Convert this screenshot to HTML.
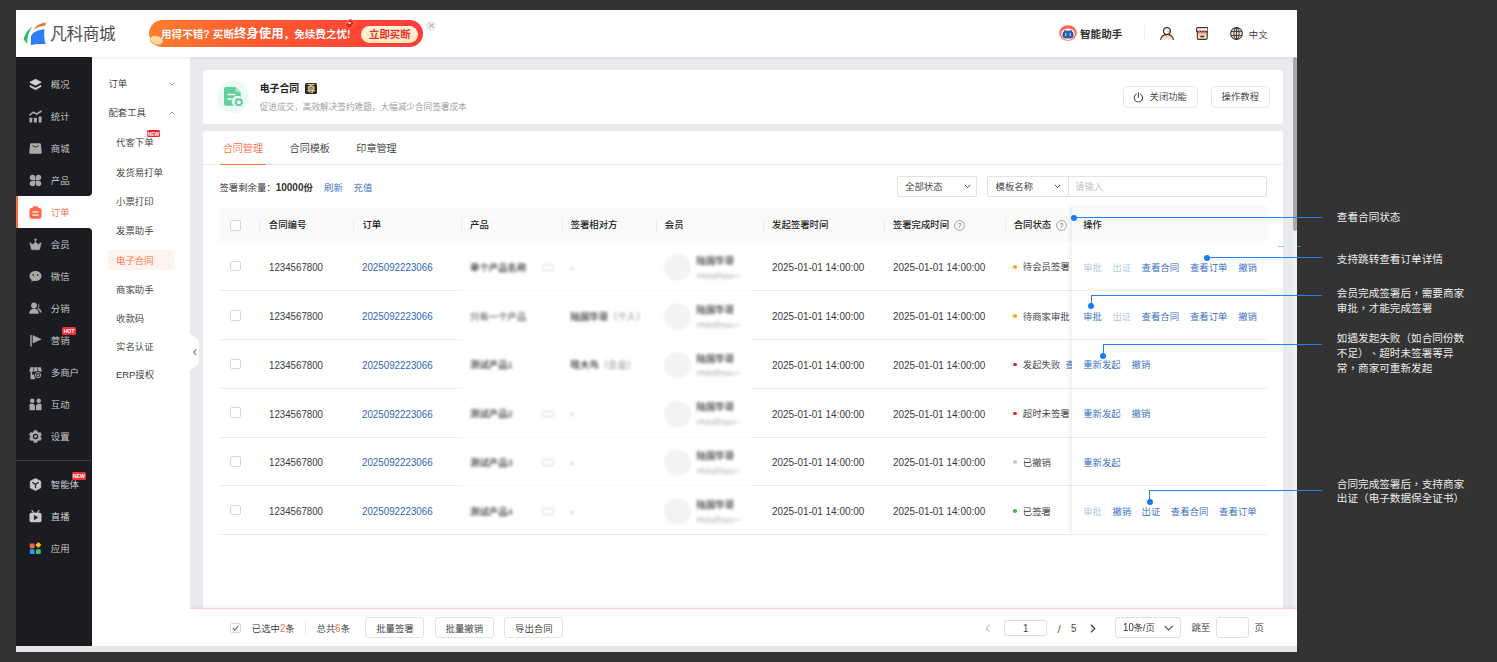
<!DOCTYPE html>
<html lang="zh-CN">
<head>
<meta charset="utf-8">
<title>电子合同</title>
<style>
*{box-sizing:border-box;margin:0;padding:0}
html,body{width:1497px;height:662px;overflow:hidden;background:#333}
body{position:relative;font-family:"Liberation Sans","Noto Sans CJK SC",sans-serif;font-size:9.4px;color:#333;line-height:1;font-weight:350}
.abs{position:absolute}
#frame{position:absolute;left:16px;top:10px;width:1281px;height:642px;background:#e9eaee;overflow:hidden}
#header{position:absolute;left:0;top:0;width:1281px;height:47px;background:#fff;box-shadow:0 1px 4px rgba(0,0,0,.08);z-index:5}
#side1{z-index:2;position:absolute;left:0;top:47px;width:76px;height:595px;background:#fff}
#main{position:absolute;left:0;top:0;width:1281px;height:642px;overflow:hidden}
#side2{z-index:2;position:absolute;left:76px;top:47px;width:98px;height:595px;background:#fff}
.badge{background:#f0303c;color:#fff;font-size:5.2px;font-weight:700;text-align:center;line-height:7.1px;border-radius:1.5px;letter-spacing:-0.1px;overflow:hidden}
.note{font-family:"Liberation Sans","Noto Sans CJK TC",sans-serif;font-weight:400;font-size:10.62px;color:#ececec;white-space:nowrap;text-spacing-trim:space-all}
#notes{position:absolute;left:0;top:0;width:1497px;height:662px;z-index:20}
.t{position:absolute;white-space:nowrap;transform:translateY(-50%)}
</style>
</head>
<body>
<div id="frame">
  <div id="header">
    <svg class="abs" style="left:7.2px;top:12.2px" width="24" height="25" viewBox="0 0 300 312"><path d="M118 60 C60 95 20 150 8 218 L55 275 C50 190 75 115 118 60Z" fill="#2fbf6b"/><path d="M285 5 C215 15 160 45 132 92 C175 62 225 45 280 42Z" fill="#ff6a35"/><path d="M268 90 C190 95 125 125 100 175 L98 290 C150 275 220 270 282 278 C265 215 262 150 268 90Z" fill="#2d7ff9"/></svg>
    <div class="t" style="left:34.2px;top:25.3px;font-size:16.6px;color:#4a4b53;letter-spacing:-0.35px;font-weight:400">凡科商城</div>
    <div class="abs" id="banner" style="left:133px;top:10px;width:274px;height:27px;border-radius:14px;background:linear-gradient(90deg,#ff7e2f 0%,#ff5a30 40%,#ff3a3c 100%)">
      <div class="abs" style="left:1px;top:16px;width:13px;height:8px;border-radius:50%;background:#ffd9a0;transform:rotate(18deg);box-shadow:0 1px 0 #e8a45a"></div>
      <div class="t" style="left:12px;top:14.4px;color:#fff;font-weight:700;font-size:10.6px;text-shadow:0 0.5px 1px rgba(200,40,0,.35)">用得不错?&nbsp;买断<span style="font-size:12.4px">终身使用</span>，免续费之忧!</div>
      <div class="abs" style="left:197.5px;top:-0.5px;width:6px;height:8px;background:#e8262c;border-radius:1px;transform:rotate(38deg);box-shadow:0 0 0 0.5px #ffb45e"></div><div class="abs" style="left:199.300px;top:1.800px;width:2.400px;height:2.400px;border-radius:50%;background:#ffd36b"></div>
      <div class="abs" style="left:212px;top:6px;width:57px;height:16.5px;border-radius:9px;background:linear-gradient(180deg,#fff6e0,#ffe5b8)"></div>
      <div class="t" style="left:220px;top:14.9px;color:#e8322c;font-weight:700;font-size:10.4px">立即买断</div>
    </div>
    <div class="abs" style="left:410px;top:10.5px;width:10px;height:10px;border-radius:50%;background:#ececec"></div>
    <svg class="abs" style="left:412.5px;top:13px" width="5" height="5" viewBox="0 0 5 5"><path d="M0.5 0.5L4.5 4.5M4.5 0.5L0.5 4.5" stroke="#888" stroke-width="0.8"/></svg>

    <svg class="abs" style="left:1043px;top:14.8px" width="18" height="16" viewBox="0 0 36 32"><ellipse cx="18" cy="16" rx="17.5" ry="15.500" fill="#fa6a4a"/><ellipse cx="18" cy="18.300" rx="13.800" ry="11.500" fill="#fff"/><path d="M10 12.500 L11.500 9.300 L15 11.500 H21 L24.500 9.300 L26 12.500 Q29.500 15 29.500 19.500 Q29.500 26.800 22 26.800 H14 Q6.500 26.800 6.500 19.500 Q6.500 15 10 12.500Z" fill="#3d55a5"/><rect x="12" y="15.800" width="2.800" height="6.600" rx="1.300" fill="#62e3ff"/><rect x="21.200" y="15.800" width="2.800" height="6.600" rx="1.300" fill="#62e3ff"/></svg>
    <div class="t" style="left:1064px;top:24.2px;font-size:10.6px;font-weight:700;color:#333">智能助手</div>
    <div class="abs" style="left:1127.5px;top:15px;width:1px;height:16px;background:#eee"></div>
    <svg class="abs" style="left:1144px;top:16.9px" width="14" height="13.300" viewBox="0 0 28 26.600"><defs><linearGradient id="pg" x1="0" y1="0" x2="0" y2="1"><stop offset="0" stop-color="#ffb896"/><stop offset="1" stop-color="#fff1ea"/></linearGradient></defs><path d="M2.500 25.500 C4 17.500 8.500 15 14 15 C19.500 15 24 17.500 25.500 25.500Z" fill="url(#pg)"/><circle cx="13.900" cy="8.100" r="6.900" fill="#fff"/><path d="M14 8 a5 5 0 0 1 5.500 -2.500 a6.900 6.900 0 0 1 -2 8.300Z" fill="#ffc4a6"/><circle cx="13.900" cy="8.100" r="6.900" fill="none" stroke="#333" stroke-width="2.200"/><path d="M1.300 25.300 C3 17.300 8 14.800 14 14.800 C20 14.800 25 17.300 26.700 25.300" fill="none" stroke="#333" stroke-width="2.200" stroke-linecap="round"/></svg>
    <svg class="abs" style="left:1179.6px;top:17.100px" width="12.500" height="13" viewBox="0 0 25 26"><defs><linearGradient id="sg" x1="0" y1="0" x2="0" y2="1"><stop offset="0" stop-color="#ff9d6e"/><stop offset="1" stop-color="#ffe9dd"/></linearGradient></defs><rect x="2.600" y="6" width="19.800" height="18.800" rx="2.800" fill="url(#sg)"/><rect x="2.600" y="1.200" width="19.800" height="5.500" fill="#fff"/><rect x="2.600" y="6" width="19.800" height="18.800" rx="2.800" fill="none" stroke="#333" stroke-width="2.200"/><path d="M3.500 1.200 H21.500 Q23.800 1.200 23.800 3.500 V8 Q23.800 10 21.800 10 Q20 10 19.300 8.600 Q18.500 10 16.500 10 Q14.700 10 14 8.600 Q13.300 10 11.500 10 Q9.700 10 8.800 8.600 Q8 10 6.200 10 Q4.400 10 3.700 8.600 Q3 10 2.200 9.500 Q1.200 9 1.200 8 V3.500 Q1.200 1.200 3.500 1.200Z" fill="#fff" stroke="#333" stroke-width="2.200" stroke-linejoin="round"/><path d="M3 6 H22 V8 Q21 9 19.300 7.500 Q18 9.200 16.500 9 Q15 9 14 7.500 Q13 9 11.500 9 Q10 9 8.800 7.500 Q7.500 9 6.200 9 Q4.500 9 3.700 7.500 L3 8Z" fill="#ff9d6e"/><rect x="8.700" y="17.600" width="7.600" height="3" rx="0.600" fill="#333"/></svg>
    <svg class="abs" style="left:1213.900px;top:17px" width="13" height="13" viewBox="0 0 26 26"><circle cx="13" cy="13" r="11.800" fill="#fff"/><path d="M8 3 H18 V23 H8Z" fill="#ffd2b8" opacity="0.900"/><path d="M2 9 H24 V17 H2Z" fill="#ffd2b8" opacity="0.700"/><circle cx="13" cy="13" r="11.700" fill="none" stroke="#333" stroke-width="2.200"/><ellipse cx="13" cy="13" rx="5.300" ry="11.700" fill="none" stroke="#333" stroke-width="1.900"/><path d="M2.200 8.800 H23.800 M2.200 17.200 H23.800 M13 1.300 V24.700" stroke="#333" stroke-width="1.900"/></svg>
    <div class="t" style="left:1232.8px;top:24.5px;font-size:9.4px;color:#333">中文</div>
  </div>
  <div id="side1">
<div class="abs" style="left:0;top:139px;width:76px;height:32px;background:#fff"></div>
<div class="abs" style="left:0;top:0;width:76px;height:139px;background:#1b1c21;border-bottom-right-radius:4px"></div>
<div class="abs" style="left:0;top:171px;width:76px;height:424px;background:#1b1c21;border-top-right-radius:4px"></div>
<div class="abs" style="left:0;top:139px;width:2px;height:32px;background:#ff6a3d"></div>
<svg class="abs" style="left:12.8px;top:20.70px" width="13" height="13" viewBox="0 0 26 26"><path d="M13 2.5 L24.5 8.5 L13 14.5 L1.500 8.5Z" fill="#d4d4d4" stroke="#d4d4d4" stroke-width="1.5" stroke-linejoin="round"/><path d="M2 14.5 L13 20 L24 14.5 L24 17.5 L13 23.5 L2 17.5Z" fill="#d4d4d4" stroke="#d4d4d4" stroke-width="1" stroke-linejoin="round"/></svg>
<div class="t" style="left:34.8px;top:27.70px;color:#d2d2d2;font-size:9.4px">概况</div>
<svg class="abs" style="left:12.8px;top:52.77px" width="13" height="13" viewBox="0 0 26 26"><rect x="0.800" y="15.500" width="5.600" height="9.700" rx="1.200" fill="#a9a9a9"/><rect x="9.700" y="15.500" width="6" height="9.700" rx="1.200" fill="#a9a9a9"/><rect x="19.300" y="12.800" width="5.900" height="12.400" rx="1.200" fill="#a9a9a9"/><path d="M1.800 10 L8 4.500 L15.500 8 L24.200 2.500" fill="none" stroke="#a9a9a9" stroke-width="3.300" stroke-linecap="round" stroke-linejoin="round"/></svg>
<div class="t" style="left:34.8px;top:59.77px;color:#d2d2d2;font-size:9.4px">统计</div>
<svg class="abs" style="left:12.8px;top:84.84px" width="13" height="13" viewBox="0 0 26 26"><path d="M4.500 2.500 H21.5 Q23.5 2.500 23.8 4.500 L25.5 21 Q25.500 23.5 23 23.5 H3 Q0.500 23.5 0.500 21 L2.200 4.500 Q2.500 2.500 4.500 2.500Z" fill="#a9a9a9"/><path d="M7.500 8 Q13 13 18.500 8" fill="none" stroke="#1b1c21" stroke-width="1.800" stroke-linecap="round"/></svg>
<div class="t" style="left:34.8px;top:91.84px;color:#d2d2d2;font-size:9.4px">商城</div>
<svg class="abs" style="left:12.8px;top:116.91px" width="13" height="13" viewBox="0 0 26 26"><path d="M7 1.500 A5.5 5.5 0 0 1 12.5 7 V12.500 H7 A5.5 5.5 0 0 1 7 1.500Z" fill="#a9a9a9"/><path d="M19 1.500 A5.5 5.5 0 0 1 19 12.500 H13.500 V7 A5.5 5.5 0 0 1 19 1.500Z" fill="#a9a9a9"/><path d="M7 13.500 H12.500 V19 A5.5 5.5 0 1 1 7 13.500Z" fill="#a9a9a9"/><path d="M13.500 13.500 H19 A5.5 5.5 0 1 1 13.500 19Z" fill="#a9a9a9"/></svg>
<div class="t" style="left:34.8px;top:123.91px;color:#d2d2d2;font-size:9.4px">产品</div>
<svg class="abs" style="left:12.8px;top:148.98px" width="13" height="13" viewBox="0 0 26 26"><rect x="0.800" y="4.200" width="24.400" height="21.200" rx="4.500" fill="#ff6a4d"/><rect x="7.500" y="0.600" width="11" height="7" rx="2.200" fill="#ff6a4d"/><rect x="6.800" y="10.300" width="12.400" height="2.800" rx="1" fill="#fff"/><rect x="6.800" y="16.800" width="12.400" height="2.800" rx="1" fill="#fff"/></svg>
<div class="t" style="left:34.8px;top:155.98px;color:#ff6a3d;font-size:9.4px">订单</div>
<svg class="abs" style="left:12.8px;top:181.05px" width="13" height="13" viewBox="0 0 26 26"><circle cx="13" cy="3.500" r="2.500" fill="#a9a9a9"/><path d="M1.500 9 L8 13.500 L13 7 L18 13.500 L24.5 9 L21.5 22 Q21.300 23.5 19.500 23.5 H6.500 Q4.700 23.5 4.500 22Z" fill="#a9a9a9" stroke="#a9a9a9" stroke-width="1" stroke-linejoin="round"/></svg>
<div class="t" style="left:34.8px;top:188.05px;color:#d2d2d2;font-size:9.4px">会员</div>
<svg class="abs" style="left:12.8px;top:213.12px" width="13" height="13" viewBox="0 0 26 26"><path d="M13 2 C19.800 2 25 6.500 25 12 C25 17.500 19.800 22 13 22 C11.500 22 10.200 21.800 9 21.400 L4.500 24 L5.500 19.800 C2.700 18 1 15.200 1 12 C1 6.500 6.200 2 13 2Z" fill="#a9a9a9"/><circle cx="8.500" cy="10" r="1.700" fill="#1b1c21"/><circle cx="17.500" cy="10" r="1.700" fill="#1b1c21"/></svg>
<div class="t" style="left:34.8px;top:220.12px;color:#d2d2d2;font-size:9.4px">微信</div>
<svg class="abs" style="left:12.8px;top:245.19px" width="13" height="13" viewBox="0 0 26 26"><circle cx="10" cy="7" r="5.800" fill="#a9a9a9"/><path d="M0.500 23.500 C0.500 16.500 4.500 13.500 10 13.500 C15.500 13.500 19.500 16.500 19.500 23.500Z" fill="#a9a9a9"/><path d="M18 2.500 C21.500 4 21.500 10.500 18.500 12.500 C22 13.500 25.500 16.500 25.500 21 H22 C21.500 17.500 19.500 15 16.500 13.500 C19.500 10.500 19.500 5.500 18 2.500Z" fill="#a9a9a9"/></svg>
<div class="t" style="left:34.8px;top:252.19px;color:#d2d2d2;font-size:9.4px">分销</div>
<svg class="abs" style="left:12.8px;top:277.26px" width="13" height="13" viewBox="0 0 26 26"><rect x="2.500" y="2" width="3" height="23" rx="1" fill="#a9a9a9"/><path d="M8 3 L24 10.500 L8 18Z" fill="#a9a9a9" stroke="#a9a9a9" stroke-width="1.200" stroke-linejoin="round"/></svg>
<div class="t" style="left:34.8px;top:284.26px;color:#d2d2d2;font-size:9.4px">营销</div>
<svg class="abs" style="left:12.8px;top:310.13px" width="13" height="13" viewBox="0 0 26 26"><path d="M3.200 0.600 H23.400 L25.600 8.800 H0.700Z" fill="#a9a9a9" stroke="#a9a9a9" stroke-width="0.600" stroke-linejoin="round"/><path d="M9.300 0.600V8.800M17.200 0.600V8.800" stroke="#1b1c21" stroke-width="1.300"/><path d="M3 8.600 H6.200 V15 H12.400 V24.600 H3Z" fill="#a9a9a9"/><circle cx="18.100" cy="16.300" r="7.600" fill="#1b1c21"/><circle cx="18.100" cy="16.300" r="5.300" fill="#1b1c21" stroke="#a9a9a9" stroke-width="2"/><path d="M18.100 12.500 L19.400 15 L21.900 16.300 L19.400 17.600 L18.100 20.100 L16.800 17.600 L14.300 16.300 L16.800 15Z" fill="#a9a9a9"/></svg>
<div class="t" style="left:34.8px;top:316.33px;color:#d2d2d2;font-size:9.4px">多商户</div>
<svg class="abs" style="left:12.8px;top:341.40px" width="13" height="13" viewBox="0 0 26 26"><circle cx="6.500" cy="5.500" r="4.500" fill="#a9a9a9"/><circle cx="19.500" cy="5.500" r="4.500" fill="#a9a9a9"/><path d="M1 13.500 Q1 11.500 3 11.500 H8.500 L12 15 V24.500 H1Z" fill="#a9a9a9"/><path d="M25 13.500 Q25 11.500 23 11.500 H17.500 L14 15 V24.500 H25Z" fill="#a9a9a9"/></svg>
<div class="t" style="left:34.8px;top:348.40px;color:#d2d2d2;font-size:9.4px">互动</div>
<svg class="abs" style="left:12.8px;top:373.47px" width="13" height="13" viewBox="0 0 26 26"><path d="M10.300 0.800 H15.700 L16.700 4.200 L19.200 5.600 L22.600 4.800 L25.300 9.500 L22.900 12 V14 L25.300 16.500 L22.600 21.200 L19.200 20.400 L16.700 21.800 L15.700 25.200 H10.300 L9.300 21.800 L6.800 20.400 L3.400 21.200 L0.700 16.500 L3.100 14 V12 L0.700 9.500 L3.400 4.800 L6.800 5.600 L9.300 4.200Z" fill="#a9a9a9" stroke="#a9a9a9" stroke-width="1" stroke-linejoin="round"/><circle cx="13" cy="13" r="5.300" fill="#1b1c21"/><circle cx="13" cy="13" r="2.800" fill="#a9a9a9"/></svg>
<div class="t" style="left:34.8px;top:380.47px;color:#d2d2d2;font-size:9.4px">设置</div>
<div class="abs" style="left:0;top:403px;width:76px;height:1px;background:#3a3b41"></div>
<svg class="abs" style="left:12.8px;top:421.10px" width="13" height="13" viewBox="0 0 26 26"><path d="M13 1 L23.500 6.500 V19.500 L13 25 L2.500 19.500 V6.500Z" fill="#c9c9c9" stroke="#c9c9c9" stroke-width="1.500" stroke-linejoin="round"/><path d="M7.500 9 L13 13 L18.500 9 M13 13 V19.500" fill="none" stroke="#1b1c21" stroke-width="2.400" stroke-linecap="round"/></svg>
<div class="t" style="left:34.8px;top:428.10px;color:#dadada;font-size:9.4px">智能体</div>
<svg class="abs" style="left:12.8px;top:453.10px" width="13" height="13" viewBox="0 0 26 26"><path d="M6 1 L9.500 5.500 M20 1 L16.500 5.500" stroke="#c9c9c9" stroke-width="2.400" stroke-linecap="round"/><rect x="1" y="5.500" width="24" height="19" rx="3.500" fill="#c9c9c9"/><path d="M10.500 10.500 L17.500 15 L10.500 19.500Z" fill="#1b1c21" stroke="#1b1c21" stroke-width="1" stroke-linejoin="round"/></svg>
<div class="t" style="left:34.8px;top:460.10px;color:#dadada;font-size:9.4px">直播</div>
<svg class="abs" style="left:12.8px;top:485.10px" width="13" height="13" viewBox="0 0 26 26"><rect x="1.500" y="3" width="9.500" height="9.500" rx="1.500" fill="#ff6a3d"/><rect x="14.500" y="1.800" width="8.500" height="8.500" rx="1.500" fill="#ffb81f" transform="rotate(45 18.750 6.050)"/><rect x="1.500" y="14.500" width="9.500" height="9.500" rx="1.500" fill="#1e9bff"/><rect x="14" y="14.500" width="9.500" height="9.500" rx="1.500" fill="#3dc06a"/></svg>
<div class="t" style="left:34.8px;top:492.10px;color:#dadada;font-size:9.4px">应用</div>
<div class="abs badge" style="left:45.9px;top:270px;width:14.2px;height:7.9px;line-height:9.600px">HOT</div>
<div class="abs badge" style="left:55.9px;top:415px;width:13.8px;height:7.8px;line-height:9.500px">NEW</div>
</div>
  <div id="side2">
<div class="t" style="left:16.4px;top:26.8px;color:#333;font-size:9.4px">订单</div>
<svg class="abs" style="left:76.500px;top:24.500px" width="6" height="4" viewBox="0 0 12 8"><path d="M1.500 1.500 L6 6 L10.500 1.500" fill="none" stroke="#777" stroke-width="1.500"/></svg>
<div class="t" style="left:16.4px;top:56.4px;color:#333;font-size:9.4px">配套工具</div>
<svg class="abs" style="left:76.500px;top:54px" width="6" height="4" viewBox="0 0 12 8"><path d="M1.500 6.500 L6 2 L10.500 6.500" fill="none" stroke="#777" stroke-width="1.500"/></svg>
<div class="abs" style="left:16px;top:193.2px;width:65.6px;height:19.8px;background:#fff3ee;border-radius:2px"></div>
<div class="t" style="left:24px;top:86.20px;color:#333;font-size:9.4px">代客下单</div>
<div class="t" style="left:24px;top:115.50px;color:#333;font-size:9.4px">发货易打单</div>
<div class="t" style="left:24px;top:144.90px;color:#333;font-size:9.4px">小票打印</div>
<div class="t" style="left:24px;top:174.40px;color:#333;font-size:9.4px">发票助手</div>
<div class="t" style="left:24px;top:203.90px;color:#ff6a3d;font-size:9.4px">电子合同</div>
<div class="t" style="left:24px;top:233.00px;color:#333;font-size:9.4px">商家助手</div>
<div class="t" style="left:24px;top:261.60px;color:#333;font-size:9.4px">收款码</div>
<div class="t" style="left:24px;top:290.10px;color:#333;font-size:9.4px">实名认证</div>
<div class="t" style="left:24px;top:317.90px;color:#333;font-size:9.4px">ERP授权</div>
<div class="abs badge" style="left:54.9px;top:72.85px;width:13.1px;height:7.1px;line-height:8.700px;background:#ee1f2f">NEW</div>
</div>
  <div id="main">
<div class="abs" style="left:187.0px;top:60.0px;width:1080.0px;height:53.7px;background:#fff;border-radius:3px"></div>
<div class="abs" style="left:200.8px;top:70.8px;width:32.0px;height:32.0px;background:#ebfaf2;border-radius:50%"></div>
<svg class="abs" style="left:208px;top:77px" width="21" height="21" viewBox="0 0 42 42"><path d="M4 0 H23 L33.500 10.500 V20 A10.500 10.500 0 0 0 19.500 37.500 H4 Q0 37.500 0 33.500 V4 Q0 0 4 0Z" fill="#5fd09b"/><path d="M23 0 L33.500 10.500 H26 Q23 10.500 23 7.500Z" fill="#a6e6c6"/><rect x="7" y="13.500" width="16" height="3" rx="1" fill="#fff"/><rect x="7" y="22.500" width="8.500" height="3" rx="1" fill="#fff"/><circle cx="29.700" cy="30.300" r="9.400" fill="#5fd09b" stroke="#fff" stroke-width="2"/><path d="M29.700 24.800 L31.400 28.300 L35.200 28.800 L32.400 31.400 L33.100 35.200 L29.700 33.300 L26.300 35.200 L27 31.400 L24.200 28.800 L28 28.300Z" fill="#fff"/></svg>
<div class="t" style="left:243.7px;top:79.4px;font-size:9.9px;font-weight:700;color:#222">电子合同</div>
<div class="abs" style="left:289.0px;top:73.0px;width:12.0px;height:11.2px;background:#2b2724;border-radius:1.500px"></div>
<div class="t" style="left:290.7px;top:79.0px;font-size:8.600px;font-weight:700;color:#ecd3a0">尊</div>
<div class="t" style="left:243.7px;top:97.2px;font-size:8.65px;color:#999">促进成交，高效解决签约难题，大幅减少合同签署成本</div>
<div class="abs" style="left:1107.3px;top:76.2px;width:74.3px;height:21.7px;background:#fff;border:1px solid #e9e9e9;border-radius:4px"></div>
<svg class="abs" style="left:1117.2px;top:81.9px" width="10.800" height="10.800" viewBox="0 0 20 20"><path d="M6 4 A7.800 7.800 0 1 0 14 4" fill="none" stroke="#444" stroke-width="1.900" stroke-linecap="round"/><path d="M10 1.500 V10" stroke="#444" stroke-width="1.900" stroke-linecap="round"/></svg>
<div class="t" style="left:1133.6px;top:88.1px;font-size:9.3px;color:#333">关闭功能</div>
<div class="abs" style="left:1195.2px;top:76.2px;width:58.6px;height:21.7px;background:#fff;border:1px solid #e9e9e9;border-radius:4px"></div>
<div class="t" style="left:1205.5px;top:87.3px;font-size:9.4px;color:#333">操作教程</div>
<div class="abs" style="left:187.0px;top:120.5px;width:1080.0px;height:529.5px;background:#fff;border-radius:3px"></div>
<div class="abs" style="left:187.0px;top:154.0px;width:1080.0px;height:1.0px;background:#eeeeee"></div>
<div class="t" style="left:206.7px;top:138.5px;font-size:10.1px;color:#ff6a40">合同管理</div>
<div class="t" style="left:273.6px;top:138.5px;font-size:10.1px;color:#333">合同模板</div>
<div class="t" style="left:340.3px;top:138.5px;font-size:10.1px;color:#333">印章管理</div>
<div class="abs" style="left:203.8px;top:153.7px;width:46.2px;height:1.6px;background:#ff6a40;border-radius:1px"></div>
<div class="t" style="left:203.4px;top:177.7px;font-size:9.4px;color:#333">签署剩余量：<b style="font-size:10px">10000</b><b>份</b></div>
<div class="t" style="left:308.0px;top:177.7px;color:#2f66bd">刷新</div>
<div class="t" style="left:337.6px;top:177.7px;color:#2f66bd">充值</div>
<div class="abs" style="left:880.8px;top:166.0px;width:80.1px;height:20.6px;background:#fff;border:1px solid #e3e3e3;border-radius:2px"></div>
<div class="t" style="left:889.0px;top:176.5px;color:#333">全部状态</div>
<svg class="abs" style="left:947.6px;top:174.2px" width="7.2" height="4.80" viewBox="0 0 12 8"><path d="M1.500 1.500 L6 6 L10.500 1.500" fill="none" stroke="#444" stroke-width="1.600"/></svg>
<div class="abs" style="left:971.4px;top:166.0px;width:279.4px;height:20.6px;background:#fff;border:1px solid #e3e3e3;border-radius:2px"></div>
<div class="abs" style="left:1051.5px;top:166.0px;width:1.0px;height:20.6px;background:#e3e3e3"></div>
<div class="t" style="left:979.6px;top:176.5px;color:#333">模板名称</div>
<svg class="abs" style="left:1038.2px;top:174.2px" width="7.2" height="4.80" viewBox="0 0 12 8"><path d="M1.500 1.500 L6 6 L10.500 1.500" fill="none" stroke="#444" stroke-width="1.600"/></svg>
<div class="t" style="left:1059.0px;top:176.5px;color:#c0c0c0">请输入</div>
<div class="abs" style="left:203.5px;top:198.1px;width:1047.5px;height:34.4px;background:#fafafa"></div>
<div class="abs" style="left:243.1px;top:208.8px;width:1.0px;height:12.0px;background:#ececec"></div>
<div class="abs" style="left:337.4px;top:208.8px;width:1.0px;height:12.0px;background:#ececec"></div>
<div class="abs" style="left:445.1px;top:208.8px;width:1.0px;height:12.0px;background:#ececec"></div>
<div class="abs" style="left:546.1px;top:208.8px;width:1.0px;height:12.0px;background:#ececec"></div>
<div class="abs" style="left:639.9px;top:208.8px;width:1.0px;height:12.0px;background:#ececec"></div>
<div class="abs" style="left:746.8px;top:208.8px;width:1.0px;height:12.0px;background:#ececec"></div>
<div class="abs" style="left:867.7px;top:208.8px;width:1.0px;height:12.0px;background:#ececec"></div>
<div class="abs" style="left:989.0px;top:208.8px;width:1.0px;height:12.0px;background:#ececec"></div>
<div class="t" style="left:252.8px;top:215.4px;font-weight:500;color:#222;font-size:9.4px">合同编号</div>
<div class="t" style="left:346.4px;top:215.4px;font-weight:500;color:#222;font-size:9.4px">订单</div>
<div class="t" style="left:454.0px;top:215.4px;font-weight:500;color:#222;font-size:9.4px">产品</div>
<div class="t" style="left:554.6px;top:215.4px;font-weight:500;color:#222;font-size:9.4px">签署相对方</div>
<div class="t" style="left:648.8px;top:215.4px;font-weight:500;color:#222;font-size:9.4px">会员</div>
<div class="t" style="left:756.0px;top:215.4px;font-weight:500;color:#222;font-size:9.4px">发起签署时间</div>
<div class="t" style="left:876.8px;top:215.4px;font-weight:500;color:#222;font-size:9.4px">签署完成时间</div>
<div class="t" style="left:997.7px;top:215.4px;font-weight:500;color:#222;font-size:9.4px">合同状态</div>
<svg class="abs" style="left:938.0px;top:209.6px" width="11" height="11" viewBox="0 0 22 22"><circle cx="11" cy="11" r="9.800" fill="none" stroke="#888" stroke-width="1.600"/><text x="11" y="15.800" font-size="14" text-anchor="middle" fill="#555" font-family="Liberation Sans, sans-serif">?</text></svg>
<svg class="abs" style="left:1040.1px;top:209.6px" width="11" height="11" viewBox="0 0 22 22"><circle cx="11" cy="11" r="9.800" fill="none" stroke="#888" stroke-width="1.600"/><text x="11" y="15.800" font-size="14" text-anchor="middle" fill="#555" font-family="Liberation Sans, sans-serif">?</text></svg>
<div class="abs" style="left:214.1px;top:210.1px;width:10.6px;height:10.6px;background:#fff;border:1px solid #d6d6d6;border-radius:1.800px"></div>
<div class="abs" style="left:203.6px;top:280.2px;width:1047.4px;height:1.0px;background:#ececec"></div>
<div class="abs" style="left:442.0px;top:280.2px;width:294.0px;height:1.0px;background:#f9f9f9"></div>
<div class="abs" style="left:214.1px;top:250.9px;width:10.6px;height:10.6px;background:#fff;border:1px solid #d6d6d6;border-radius:1.800px"></div>
<div class="t" style="left:252.5px;top:257.0px;font-size:11px;transform:translateY(-50%) scaleX(0.883);transform-origin:0 50%;color:#3a3a3a">1234567800</div>
<div class="t" style="left:346.1px;top:257.0px;font-size:11px;transform:translateY(-50%) scaleX(0.888);transform-origin:0 50%;color:#2f66bd">2025092223066</div>
<div class="t" style="left:454.0px;top:257.5px;font-size:9.4px;color:#262626;font-weight:500;filter:blur(1.45px)">单个产品名称</div>
<div class="abs" style="left:526.0px;top:254.1px;width:12.0px;height:6.6px;border:1px solid #d0d0d0;border-radius:2.5px;filter:blur(1.3px)"></div>
<div class="t" style="left:554.6px;top:257.5px;font-size:9.4px;color:#222;font-weight:500;filter:blur(1.45px)">-</div>
<div class="abs" style="left:648.4px;top:243.9px;width:26.8px;height:26.8px;background:#f3f3f3;border-radius:50%;filter:blur(1.1px)"></div>
<div class="t" style="left:680.5px;top:250.8px;font-size:9.4px;color:#2a2a2a;font-weight:500;filter:blur(1.45px)">陆国华哥</div>
<div class="t" style="left:680.5px;top:266.5px;font-size:9.2px;color:#b5b5b5;filter:blur(1.45px)">#MallNav~</div>
<div class="t" style="left:755.7px;top:257.0px;font-size:11px;transform:translateY(-50%) scaleX(0.903);transform-origin:0 50%;color:#3a3a3a">2025-01-01 14:00:00</div>
<div class="t" style="left:876.5px;top:257.0px;font-size:11px;transform:translateY(-50%) scaleX(0.903);transform-origin:0 50%;color:#3a3a3a">2025-01-01 14:00:00</div>
<div class="abs" style="left:997.4px;top:255.0px;width:3.6px;height:3.6px;background:#faad14;border-radius:50%"></div>
<div class="t" style="left:1006.8px;top:257.3px;color:#333">待会员签署</div>
<div class="abs" style="left:203.6px;top:328.8px;width:1047.4px;height:1.0px;background:#ececec"></div>
<div class="abs" style="left:442.0px;top:328.8px;width:294.0px;height:1.0px;background:#f9f9f9"></div>
<div class="abs" style="left:214.1px;top:300.0px;width:10.6px;height:10.6px;background:#fff;border:1px solid #d6d6d6;border-radius:1.800px"></div>
<div class="t" style="left:252.5px;top:306.1px;font-size:11px;transform:translateY(-50%) scaleX(0.883);transform-origin:0 50%;color:#3a3a3a">1234567800</div>
<div class="t" style="left:346.1px;top:306.1px;font-size:11px;transform:translateY(-50%) scaleX(0.888);transform-origin:0 50%;color:#2f66bd">2025092223066</div>
<div class="t" style="left:454.0px;top:306.6px;font-size:9.4px;color:#5a5a5a;font-weight:500;filter:blur(1.45px)">只有一个产品</div>
<div class="t" style="left:554.6px;top:306.6px;font-size:9.4px;color:#222;font-weight:500;filter:blur(1.45px)">陆国华哥<span style="color:#999">（个人）</span></div>
<div class="abs" style="left:648.4px;top:293.0px;width:26.8px;height:26.8px;background:#f3f3f3;border-radius:50%;filter:blur(1.1px)"></div>
<div class="t" style="left:680.5px;top:299.9px;font-size:9.4px;color:#2a2a2a;font-weight:500;filter:blur(1.45px)">陆国华哥</div>
<div class="t" style="left:680.5px;top:315.6px;font-size:9.2px;color:#b5b5b5;filter:blur(1.45px)">#MallNav~</div>
<div class="t" style="left:755.7px;top:306.1px;font-size:11px;transform:translateY(-50%) scaleX(0.903);transform-origin:0 50%;color:#3a3a3a">2025-01-01 14:00:00</div>
<div class="t" style="left:876.5px;top:306.1px;font-size:11px;transform:translateY(-50%) scaleX(0.903);transform-origin:0 50%;color:#3a3a3a">2025-01-01 14:00:00</div>
<div class="abs" style="left:997.4px;top:304.1px;width:3.6px;height:3.6px;background:#faad14;border-radius:50%"></div>
<div class="t" style="left:1006.8px;top:306.7px;color:#333">待商家审批</div>
<div class="abs" style="left:203.6px;top:377.8px;width:1047.4px;height:1.0px;background:#ececec"></div>
<div class="abs" style="left:442.0px;top:377.8px;width:294.0px;height:1.0px;background:#f9f9f9"></div>
<div class="abs" style="left:214.1px;top:348.7px;width:10.6px;height:10.6px;background:#fff;border:1px solid #d6d6d6;border-radius:1.800px"></div>
<div class="t" style="left:252.5px;top:354.8px;font-size:11px;transform:translateY(-50%) scaleX(0.883);transform-origin:0 50%;color:#3a3a3a">1234567800</div>
<div class="t" style="left:346.1px;top:354.8px;font-size:11px;transform:translateY(-50%) scaleX(0.888);transform-origin:0 50%;color:#2f66bd">2025092223066</div>
<div class="t" style="left:454.0px;top:355.3px;font-size:9.4px;color:#262626;font-weight:500;filter:blur(1.45px)">测试产品1</div>
<div class="t" style="left:554.6px;top:355.3px;font-size:9.4px;color:#222;font-weight:500;filter:blur(1.45px)">啥大鸟<span style="color:#999">（企业）</span></div>
<div class="abs" style="left:648.4px;top:341.7px;width:26.8px;height:26.8px;background:#f3f3f3;border-radius:50%;filter:blur(1.1px)"></div>
<div class="t" style="left:680.5px;top:348.6px;font-size:9.4px;color:#2a2a2a;font-weight:500;filter:blur(1.45px)">陆国华哥</div>
<div class="t" style="left:680.5px;top:364.3px;font-size:9.2px;color:#b5b5b5;filter:blur(1.45px)">#MallNav~</div>
<div class="t" style="left:755.7px;top:354.8px;font-size:11px;transform:translateY(-50%) scaleX(0.903);transform-origin:0 50%;color:#3a3a3a">2025-01-01 14:00:00</div>
<div class="t" style="left:876.5px;top:354.8px;font-size:11px;transform:translateY(-50%) scaleX(0.903);transform-origin:0 50%;color:#3a3a3a">2025-01-01 14:00:00</div>
<div class="abs" style="left:997.4px;top:352.8px;width:3.6px;height:3.6px;background:#f5222d;border-radius:50%"></div>
<div class="t" style="left:1006.8px;top:354.9px;color:#333">发起失败</div>
<div class="t" style="left:1049.3px;top:354.9px;color:#2f66bd">查看原因</div>
<div class="abs" style="left:203.6px;top:426.5px;width:1047.4px;height:1.0px;background:#ececec"></div>
<div class="abs" style="left:442.0px;top:426.5px;width:294.0px;height:1.0px;background:#f9f9f9"></div>
<div class="abs" style="left:214.1px;top:397.4px;width:10.6px;height:10.6px;background:#fff;border:1px solid #d6d6d6;border-radius:1.800px"></div>
<div class="t" style="left:252.5px;top:403.6px;font-size:11px;transform:translateY(-50%) scaleX(0.883);transform-origin:0 50%;color:#3a3a3a">1234567800</div>
<div class="t" style="left:346.1px;top:403.6px;font-size:11px;transform:translateY(-50%) scaleX(0.888);transform-origin:0 50%;color:#2f66bd">2025092223066</div>
<div class="t" style="left:454.0px;top:404.1px;font-size:9.4px;color:#262626;font-weight:500;filter:blur(1.45px)">测试产品2</div>
<div class="abs" style="left:526.0px;top:400.7px;width:12.0px;height:6.6px;border:1px solid #d0d0d0;border-radius:2.5px;filter:blur(1.3px)"></div>
<div class="t" style="left:554.6px;top:404.1px;font-size:9.4px;color:#222;font-weight:500;filter:blur(1.45px)">-</div>
<div class="abs" style="left:648.4px;top:390.5px;width:26.8px;height:26.8px;background:#f3f3f3;border-radius:50%;filter:blur(1.1px)"></div>
<div class="t" style="left:680.5px;top:397.4px;font-size:9.4px;color:#2a2a2a;font-weight:500;filter:blur(1.45px)">陆国华哥</div>
<div class="t" style="left:680.5px;top:413.1px;font-size:9.2px;color:#b5b5b5;filter:blur(1.45px)">#MallNav~</div>
<div class="t" style="left:755.7px;top:403.6px;font-size:11px;transform:translateY(-50%) scaleX(0.903);transform-origin:0 50%;color:#3a3a3a">2025-01-01 14:00:00</div>
<div class="t" style="left:876.5px;top:403.6px;font-size:11px;transform:translateY(-50%) scaleX(0.903);transform-origin:0 50%;color:#3a3a3a">2025-01-01 14:00:00</div>
<div class="abs" style="left:997.4px;top:401.6px;width:3.6px;height:3.6px;background:#f5222d;border-radius:50%"></div>
<div class="t" style="left:1006.8px;top:404.2px;color:#333">超时未签署</div>
<div class="abs" style="left:203.6px;top:475.0px;width:1047.4px;height:1.0px;background:#ececec"></div>
<div class="abs" style="left:442.0px;top:475.0px;width:294.0px;height:1.0px;background:#f9f9f9"></div>
<div class="abs" style="left:214.1px;top:446.1px;width:10.6px;height:10.6px;background:#fff;border:1px solid #d6d6d6;border-radius:1.800px"></div>
<div class="t" style="left:252.5px;top:452.2px;font-size:11px;transform:translateY(-50%) scaleX(0.883);transform-origin:0 50%;color:#3a3a3a">1234567800</div>
<div class="t" style="left:346.1px;top:452.2px;font-size:11px;transform:translateY(-50%) scaleX(0.888);transform-origin:0 50%;color:#2f66bd">2025092223066</div>
<div class="t" style="left:454.0px;top:452.8px;font-size:9.4px;color:#262626;font-weight:500;filter:blur(1.45px)">测试产品3</div>
<div class="abs" style="left:526.0px;top:449.4px;width:12.0px;height:6.6px;border:1px solid #d0d0d0;border-radius:2.5px;filter:blur(1.3px)"></div>
<div class="t" style="left:554.6px;top:452.8px;font-size:9.4px;color:#222;font-weight:500;filter:blur(1.45px)">-</div>
<div class="abs" style="left:648.4px;top:439.2px;width:26.8px;height:26.8px;background:#f3f3f3;border-radius:50%;filter:blur(1.1px)"></div>
<div class="t" style="left:680.5px;top:446.1px;font-size:9.4px;color:#2a2a2a;font-weight:500;filter:blur(1.45px)">陆国华哥</div>
<div class="t" style="left:680.5px;top:461.8px;font-size:9.2px;color:#b5b5b5;filter:blur(1.45px)">#MallNav~</div>
<div class="t" style="left:755.7px;top:452.2px;font-size:11px;transform:translateY(-50%) scaleX(0.903);transform-origin:0 50%;color:#3a3a3a">2025-01-01 14:00:00</div>
<div class="t" style="left:876.5px;top:452.2px;font-size:11px;transform:translateY(-50%) scaleX(0.903);transform-origin:0 50%;color:#3a3a3a">2025-01-01 14:00:00</div>
<div class="abs" style="left:997.4px;top:450.2px;width:3.6px;height:3.6px;background:#c8c8c8;border-radius:50%"></div>
<div class="t" style="left:1006.8px;top:452.9px;color:#333">已撤销</div>
<div class="abs" style="left:203.6px;top:523.9px;width:1047.4px;height:1.0px;background:#ececec"></div>
<div class="abs" style="left:214.1px;top:494.9px;width:10.6px;height:10.6px;background:#fff;border:1px solid #d6d6d6;border-radius:1.800px"></div>
<div class="t" style="left:252.5px;top:501.1px;font-size:11px;transform:translateY(-50%) scaleX(0.883);transform-origin:0 50%;color:#3a3a3a">1234567800</div>
<div class="t" style="left:346.1px;top:501.1px;font-size:11px;transform:translateY(-50%) scaleX(0.888);transform-origin:0 50%;color:#2f66bd">2025092223066</div>
<div class="t" style="left:454.0px;top:501.6px;font-size:9.4px;color:#262626;font-weight:500;filter:blur(1.45px)">测试产品4</div>
<div class="abs" style="left:526.0px;top:498.2px;width:12.0px;height:6.6px;border:1px solid #d0d0d0;border-radius:2.5px;filter:blur(1.3px)"></div>
<div class="t" style="left:554.6px;top:501.6px;font-size:9.4px;color:#222;font-weight:500;filter:blur(1.45px)">-</div>
<div class="abs" style="left:648.4px;top:488.0px;width:26.8px;height:26.8px;background:#f3f3f3;border-radius:50%;filter:blur(1.1px)"></div>
<div class="t" style="left:680.5px;top:494.9px;font-size:9.4px;color:#2a2a2a;font-weight:500;filter:blur(1.45px)">陆国华哥</div>
<div class="t" style="left:680.5px;top:510.6px;font-size:9.2px;color:#b5b5b5;filter:blur(1.45px)">#MallNav~</div>
<div class="t" style="left:755.7px;top:501.1px;font-size:11px;transform:translateY(-50%) scaleX(0.903);transform-origin:0 50%;color:#3a3a3a">2025-01-01 14:00:00</div>
<div class="t" style="left:876.5px;top:501.1px;font-size:11px;transform:translateY(-50%) scaleX(0.903);transform-origin:0 50%;color:#3a3a3a">2025-01-01 14:00:00</div>
<div class="abs" style="left:997.4px;top:499.1px;width:3.6px;height:3.6px;background:#3fb950;border-radius:50%"></div>
<div class="t" style="left:1006.8px;top:501.7px;color:#333">已签署</div>
<div class="abs" style="left:1055.6px;top:197.2px;width:195.4px;height:327.1px;background:#fff;box-shadow:-2px 0 4px rgba(0,0,0,.07)"></div>
<div class="abs" style="left:1055.6px;top:197.7px;width:195.4px;height:34.5px;background:#fafafa;box-shadow:0 -1px 2px rgba(0,0,0,.035)"></div>
<div class="t" style="left:1067.2px;top:215.4px;font-weight:500;color:#222;font-size:9.4px">操作</div>
<div class="abs" style="left:1055.6px;top:280.2px;width:195.4px;height:1.0px;background:#ececec"></div>
<div class="t" style="left:1067.2px;top:258.0px;color:#aec4e6">审批</div>
<div class="t" style="left:1096.4px;top:258.0px;color:#aec4e6">出证</div>
<div class="t" style="left:1125.6px;top:258.0px;color:#2f66bd">查看合同</div>
<div class="t" style="left:1173.9px;top:258.0px;color:#2f66bd">查看订单</div>
<div class="t" style="left:1222.2px;top:258.0px;color:#2f66bd">撤销</div>
<div class="abs" style="left:1055.6px;top:328.8px;width:195.4px;height:1.0px;background:#ececec"></div>
<div class="t" style="left:1067.2px;top:306.7px;color:#2f66bd">审批</div>
<div class="t" style="left:1096.4px;top:306.7px;color:#aec4e6">出证</div>
<div class="t" style="left:1125.6px;top:306.7px;color:#2f66bd">查看合同</div>
<div class="t" style="left:1173.9px;top:306.7px;color:#2f66bd">查看订单</div>
<div class="t" style="left:1222.2px;top:306.7px;color:#2f66bd">撤销</div>
<div class="abs" style="left:1055.6px;top:377.8px;width:195.4px;height:1.0px;background:#ececec"></div>
<div class="t" style="left:1067.2px;top:355.4px;color:#2f66bd">重新发起</div>
<div class="t" style="left:1115.5px;top:355.4px;color:#2f66bd">撤销</div>
<div class="abs" style="left:1055.6px;top:426.5px;width:195.4px;height:1.0px;background:#ececec"></div>
<div class="t" style="left:1067.2px;top:404.2px;color:#2f66bd">重新发起</div>
<div class="t" style="left:1115.5px;top:404.2px;color:#2f66bd">撤销</div>
<div class="abs" style="left:1055.6px;top:475.0px;width:195.4px;height:1.0px;background:#ececec"></div>
<div class="t" style="left:1067.2px;top:452.9px;color:#2f66bd">重新发起</div>
<div class="abs" style="left:1055.6px;top:523.9px;width:195.4px;height:1.0px;background:#ececec"></div>
<div class="t" style="left:1067.2px;top:501.7px;color:#aec4e6">审批</div>
<div class="t" style="left:1096.4px;top:501.7px;color:#2f66bd">撤销</div>
<div class="t" style="left:1125.6px;top:501.7px;color:#2f66bd">出证</div>
<div class="t" style="left:1154.8px;top:501.7px;color:#2f66bd">查看合同</div>
<div class="t" style="left:1203.1px;top:501.7px;color:#2f66bd">查看订单</div>
<div class="abs" style="left:1277.0px;top:47.0px;width:4.0px;height:551.0px;background:#f1f1f1"></div>
<div class="abs" style="left:1277.0px;top:47.0px;width:4.0px;height:174.0px;background:#a9a9a9;border-radius:2px"></div>
<div class="abs" style="left:174.0px;top:598.0px;width:1107.0px;height:38.0px;background:#fff;box-shadow:0 -1px 5px rgba(0,0,0,.06);border-top:1px solid #ffcdbe"></div>
<div class="abs" style="left:0;top:636px;width:1281px;height:6px;background:#e6e6e6;z-index:6"></div>
<div class="abs" style="left:214.4px;top:612.9px;width:10.6px;height:10.6px;background:#fff;border:1px solid #d6d6d6;border-radius:1.800px"></div><svg class="abs" style="left:216.2px;top:615.2px" width="7" height="6" viewBox="0 0 14 12"><path d="M1.500 6 L5.500 10 L12.500 2" fill="none" stroke="#555" stroke-width="2.100"/></svg>
<div class="t" style="left:235.8px;top:617.9px;color:#333">已选中<span style="display:inline-block;font-size:11px;transform:scaleX(.88);transform-origin:0 50%;margin-right:-0.75px;color:#ff6a40">2</span>条</div>
<div class="abs" style="left:289.2px;top:612.0px;width:1.0px;height:12.0px;background:#e8e8e8"></div>
<div class="t" style="left:300.5px;top:617.9px;color:#333">总共<span style="display:inline-block;font-size:11px;transform:scaleX(.88);transform-origin:0 50%;margin-right:-0.75px;color:#ff6a40">6</span>条</div>
<div class="abs" style="left:349.2px;top:607.4px;width:59.1px;height:20.8px;background:#fff;border:1px solid #e4e4e4;border-radius:3px"></div>
<div class="t" style="left:360.2px;top:618.7px;color:#333">批量签署</div>
<div class="abs" style="left:418.6px;top:607.4px;width:59.1px;height:20.8px;background:#fff;border:1px solid #e4e4e4;border-radius:3px"></div>
<div class="t" style="left:429.6px;top:618.7px;color:#333">批量撤销</div>
<div class="abs" style="left:488.0px;top:607.4px;width:59.1px;height:20.8px;background:#fff;border:1px solid #e4e4e4;border-radius:3px"></div>
<div class="t" style="left:499.0px;top:618.7px;color:#333">导出合同</div>
<svg class="abs" style="left:968.6px;top:613.6px" width="6" height="9" viewBox="0 0 12 18"><path d="M10 1.500 L2.500 9 L10 16.500" fill="none" stroke="#c4c4c4" stroke-width="2.200"/></svg>
<div class="abs" style="left:988.3px;top:609.6px;width:42.7px;height:16.2px;background:#fff;border:1px solid #e0e0e0;border-radius:3px"></div>
<div class="t" style="left:1007.2px;top:617.5px;font-size:11px;transform:translateY(-50%) scaleX(0.88);transform-origin:0 50%;color:#444">1</div>
<div class="t" style="left:1041.6px;top:619.6px;color:#555;font-size:11.5px">/</div>
<div class="t" style="left:1055.4px;top:617.5px;font-size:11px;transform:translateY(-50%) scaleX(0.88);transform-origin:0 50%;color:#444">5</div>
<svg class="abs" style="left:1074.4px;top:613.6px" width="6" height="9" viewBox="0 0 12 18"><path d="M2 1.500 L9.500 9 L2 16.500" fill="none" stroke="#3a3a3a" stroke-width="2.400"/></svg>
<div class="abs" style="left:1098.5px;top:607.0px;width:66.1px;height:20.8px;background:#fff;border:1px solid #e0e0e0;border-radius:3px"></div>
<div class="t" style="left:1106.7px;top:617.4px;color:#333"><span style="display:inline-block;font-size:11px;transform:scaleX(.88);transform-origin:0 50%;margin-right:-1.5px;">10</span>条/页</div>
<svg class="abs" style="left:1148.4px;top:615.2px" width="9.400" height="6" viewBox="0 0 18.800 12"><path d="M1.500 2 L9.400 10 L17.300 2" fill="none" stroke="#555" stroke-width="2.200"/></svg>
<div class="t" style="left:1175.4px;top:618.0px;color:#333">跳至</div>
<div class="abs" style="left:1200.0px;top:607.0px;width:32.5px;height:20.8px;background:#fff;border:1px solid #e0e0e0;border-radius:3px"></div>
<div class="t" style="left:1238.5px;top:618.0px;color:#333">页</div>
<svg class="abs" style="left:174.4px;top:323.6px" width="10" height="36" viewBox="0 0 10 36"><path d="M0 0 L8 5.600 Q8.800 6.200 8.800 7.200 V28.800 Q8.800 29.800 8 30.400 L0 36Z" fill="#fff"/><path d="M6.300 15.300 L3.700 18.300 L6.300 21.300" fill="none" stroke="#7d828e" stroke-width="1.200"/></svg>
</div>
</div>
<div id="notes" lang="zh-TW">
<div class="abs" style="left:1074.0px;top:216.9px;width:248.3px;height:1px;background:#2482f3"></div>
<div class="abs" style="left:1071.1px;top:214.7px;width:6px;height:6px;border-radius:50%;background:#1677ff"></div>
<div class="abs" style="left:1206.8px;top:256.5px;width:115.5px;height:1px;background:#2482f3"></div>
<div class="abs" style="left:1203.7px;top:254.6px;width:6px;height:6px;border-radius:50%;background:#1677ff"></div>
<div class="abs" style="left:1090.8px;top:295.1px;width:1px;height:10.9px;background:#2482f3"></div>
<div class="abs" style="left:1090.8px;top:294.6px;width:231.5px;height:1px;background:#2482f3"></div>
<div class="abs" style="left:1088.3px;top:303.0px;width:6px;height:6px;border-radius:50%;background:#1677ff"></div>
<div class="abs" style="left:1102.5px;top:344.3px;width:1px;height:11.2px;background:#2482f3"></div>
<div class="abs" style="left:1102.5px;top:343.8px;width:219.8px;height:1px;background:#2482f3"></div>
<div class="abs" style="left:1100.0px;top:352.5px;width:6px;height:6px;border-radius:50%;background:#1677ff"></div>
<div class="abs" style="left:1149.4px;top:490.4px;width:1px;height:11.3px;background:#2482f3"></div>
<div class="abs" style="left:1149.4px;top:489.9px;width:172.9px;height:1px;background:#2482f3"></div>
<div class="abs" style="left:1146.9px;top:498.7px;width:6px;height:6px;border-radius:50%;background:#1677ff"></div>
<div class="abs" style="left:1278.2px;top:246px;width:6px;height:1px;background:#8fc0fa"></div>
<div class="abs" style="left:1297px;top:246px;width:4px;height:1px;background:#3f7fd0"></div>
<div class="t note" style="left:1336.8px;top:217.0px">查看合同状态</div>
<div class="t note" style="left:1336.8px;top:258.9px">支持跳转查看订单详情</div>
<div class="t note" style="left:1336.8px;top:293.3px">会员完成签署后，需要商家</div><div class="t note" style="left:1336.8px;top:307.7px">审批，才能完成签署</div>
<div class="t note" style="left:1336.8px;top:337.5px">如遇发起失败（如合同份数</div><div class="t note" style="left:1336.8px;top:352.8px">不足）、超时未签署等异</div><div class="t note" style="left:1336.8px;top:367.7px">常，商家可重新发起</div>
<div class="t note" style="left:1336.8px;top:483.7px">合同完成签署后，支持商家</div><div class="t note" style="left:1336.8px;top:498.0px">出证（电子数据保全证书）</div>
</div>
</body>
</html>
